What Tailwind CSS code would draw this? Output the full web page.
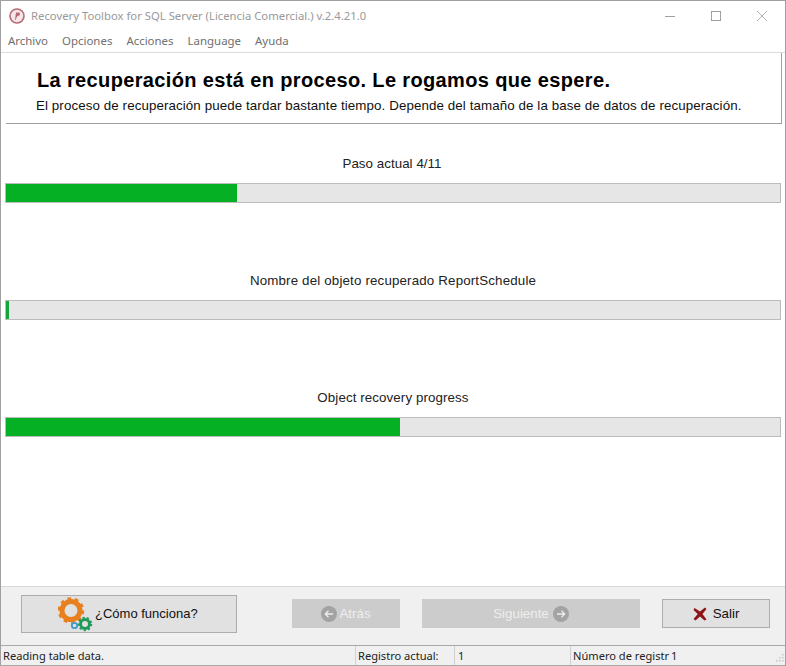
<!DOCTYPE html>
<html>
<head>
<meta charset="utf-8">
<script src="https://cdn.jsdelivr.net/npm/@tailwindcss/browser@4"></script>
</head>
<body class="bg-white">
<div class="w-[786px] h-[666px] flex flex-col overflow-hidden bg-white border-t border-l border-r border-[#a0a0a0] font-['Liberation_Sans',sans-serif] text-black">
  <div class="h-[29px] flex items-center shrink-0">
    <svg class="ml-[8px] w-[16px] h-[16px]" viewBox="0 0 16 16"><circle cx="8" cy="8" r="7" fill="#f6e6e8" stroke="#b56a78" stroke-width="1.6"/><path d="M6 12 L7 4.500 H10.500 L11 7 L8 8.500 L6.600 12Z" fill="#b56a78"/></svg>
    <span class="ml-[6px] font-['Noto_Sans',sans-serif] text-[11.3px] text-[#999999] leading-none">Recovery Toolbox for SQL Server (Licencia Comercial.) v.2.4.21.0</span>
    <div class="ml-auto flex items-center">
      <svg class="w-[10px] h-[10px] mr-[36px]" viewBox="0 0 10 10"><path d="M0 5.500H10" stroke="#a0a0a0"/></svg>
      <svg class="w-[10px] h-[10px] mr-[36px]" viewBox="0 0 10 10"><rect x=".5" y=".5" width="9" height="9" fill="none" stroke="#a0a0a0"/></svg>
      <svg class="w-[10px] h-[10px] mr-[18px]" viewBox="0 0 10 10"><path d="M0 0L10 10M10 0L0 10" stroke="#a0a0a0" stroke-width=".8"/></svg>
    </div>
  </div>
  <div class="h-[23px] flex items-center shrink-0 gap-[14px] pl-[7px] font-['Noto_Sans',sans-serif] text-[11.45px] text-[#707070] border-b border-[#dcdcdc]">
    <span>Archivo</span><span>Opciones</span><span>Acciones</span><span>Language</span><span>Ayuda</span>
  </div>
  <div class="h-[71px] shrink-0 ml-[5px] mr-[3px] pl-[31px] pt-[16px] border-r border-b border-[#a0a0a0]">
    <div class="text-[20px] font-bold leading-[22px] tracking-[0.36px]">La recuperación está en proceso. Le rogamos que espere.</div>
    <div class="text-[13.33px] leading-[16px] mt-[7px] -ml-[1px] tracking-[0.1px] text-[#111]">El proceso de recuperación puede tardar bastante tiempo. Depende del tamaño de la base de datos de recuperación.</div>
  </div>
  <div class="flex-1 flex flex-col pl-[4px] pr-[4px] pt-[32px] gap-[70px]">
    <div>
      <div class="text-[13.33px] leading-[16px] text-center text-[#222] pr-[2px] tracking-[0.05px]">Paso actual 4/11</div>
      <div class="mt-[11px] h-[20px] bg-[#e6e6e6] border border-[#bcbcbc]"><div class="h-full w-[231px] bg-[#06b025]"></div></div>
    </div>
    <div>
      <div class="text-[13.33px] leading-[16px] text-center text-[#222] tracking-[0.16px]">Nombre del objeto recuperado ReportSchedule</div>
      <div class="mt-[11px] h-[20px] bg-[#e6e6e6] border border-[#bcbcbc]"><div class="h-full w-[3px] bg-[#16a53a]"></div></div>
    </div>
    <div>
      <div class="text-[13.33px] leading-[16px] text-center text-[#222] tracking-[0.1px]">Object recovery progress</div>
      <div class="mt-[11px] h-[20px] bg-[#e6e6e6] border border-[#bcbcbc]"><div class="h-full w-[394px] bg-[#06b025]"></div></div>
    </div>
  </div>
  <div class="h-[59px] shrink-0 bg-[#f0f0f0] border-t border-[#d8d8d8] relative">
    <div class="absolute left-[20px] top-[8px] w-[216px] h-[38px] bg-[#e1e1e1] border border-[#adadad] flex items-center text-[13px] text-[#111]">
      <svg class="ml-[36px] w-[38px] h-[36px] shrink-0" viewBox="0 0 38 36">
        <circle cx="13" cy="14.500" r="9" fill="none" stroke="#e8801f" stroke-width="5"/>
        <circle cx="13" cy="14.500" r="11.500" fill="none" stroke="#e8801f" stroke-width="3.500" stroke-dasharray="3.600 3.600"/>
        <circle cx="27" cy="28" r="4.500" fill="none" stroke="#1f9a5a" stroke-width="3"/>
        <circle cx="27" cy="28" r="6.300" fill="none" stroke="#1f9a5a" stroke-width="1.800" stroke-dasharray="2.200 2.200"/>
        <circle cx="16.500" cy="29.500" r="2.700" fill="none" stroke="#3b9bd0" stroke-width="1.800"/>
      </svg>
      <span class="-ml-[1px]">¿Cómo funciona?</span>
    </div>
    <div class="absolute left-[291px] top-[12px] w-[108px] h-[29px] bg-[#cccccc] flex items-center justify-center gap-[2px] text-[13.33px] text-[#eeeeee]">
      <svg class="w-[16px] h-[16px]" viewBox="0 0 16 16"><circle cx="8" cy="8" r="8" fill="#a3a3a3"/><path d="M12 8H4.500M7.500 4.800L4.300 8L7.500 11.200" fill="none" stroke="#eee" stroke-width="1.300"/></svg>
      <span>Atrás</span>
    </div>
    <div class="absolute left-[421px] top-[12px] w-[218px] h-[29px] bg-[#cccccc] flex items-center justify-center gap-[4px] text-[13.33px] text-[#eeeeee]">
      <span>Siguiente</span>
      <svg class="w-[16px] h-[16px]" viewBox="0 0 16 16"><circle cx="8" cy="8" r="8" fill="#a3a3a3"/><path d="M4 8H11.500M8.500 4.800L11.700 8L8.500 11.200" fill="none" stroke="#eee" stroke-width="1.300"/></svg>
    </div>
    <div class="absolute left-[661px] top-[12px] w-[108px] h-[29px] bg-[#e1e1e1] border border-[#adadad] flex items-center justify-center gap-[6px] text-[13.33px] text-[#111]">
      <svg class="w-[14px] h-[14px]" viewBox="0 0 14 14"><path d="M1.500 1L7 4.500L12 .5L13.500 2L9.500 7L13.500 12.500L11.500 13.500L7 9.500L2.500 13.500L.5 12L4.800 7L.5 3Z" fill="#8c1414"/></svg>
      <span>Salir</span>
    </div>
  </div>
  <div class="h-[21px] shrink-0 bg-[#f0f0f0] border-t border-b border-[#a8a8a8] flex items-center font-['Noto_Sans',sans-serif] text-[11.1px] text-[#222] leading-none relative">
    <div class="w-[354px] pl-[2px] shrink-0">Reading table data.</div>
    <div class="w-[99px] pl-[2px] shrink-0 border-l border-[#d0d0d0] h-full flex items-center">Registro actual:</div>
    <div class="w-[116px] pl-[3px] shrink-0 border-l border-[#d0d0d0] h-full flex items-center">1</div>
    <div class="w-[100px] pl-[2px] shrink-0 border-l border-[#d0d0d0] h-full flex items-center whitespace-nowrap">Número de registr</div>
    <div class="pl-[1px]">1</div>
    <svg class="absolute right-[1px] bottom-[1px] w-[11px] h-[11px]" viewBox="0 0 11 11"><path d="M9 1h1.500v1.500H9zM6 4h1.500v1.500H6zM9 4h1.500v1.500H9zM3 7h1.500v1.500H3zM6 7h1.500v1.500H6zM9 7h1.500v1.500H9z" fill="#c4c4c4"/></svg>
  </div>
</div>
</body>
</html>
